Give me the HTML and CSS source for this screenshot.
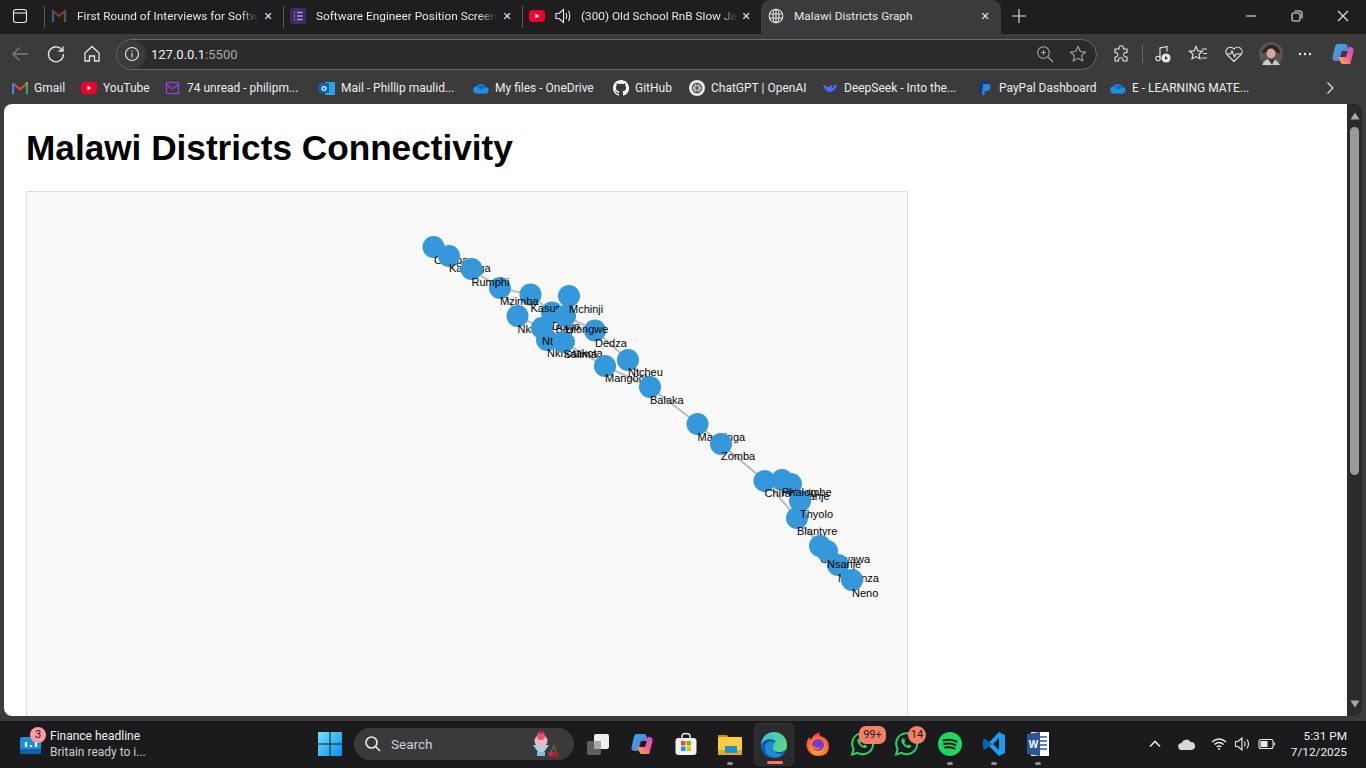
FILE: index.html
```html
<!DOCTYPE html>
<html lang="en">
<head>
<meta charset="utf-8">
<title>Malawi Districts Graph</title>
<link rel="stylesheet" href="styles.css">
</head>
<body>
<div class="tabstrip">
  <div class="sidebtn"><svg width="16" height="16" viewBox="0 0 16 16" class="ln"><rect x="1.500" y="1.500" width="13" height="13" rx="2.500"/><path d="M1.500 5h13"/></svg></div>
  <div class="tab sep">
    <svg class="ticon" width="16" height="16" viewBox="0 0 16 16"><path d="M2 14V3l6 5 6-5v11" fill="none" stroke="#8e3a34" stroke-width="2.200"/><path d="M2 14V4" stroke="#2d5f8f" stroke-width="2.200"/><path d="M14 14V4" stroke="#2f6b46" stroke-width="2.200"/></svg>
    <span class="ttext">First Round of Interviews for Softw</span><span class="tclose">✕</span>
  </div>
  <div class="tab sep">
    <svg class="ticon" width="16" height="16" viewBox="0 0 16 16"><rect width="16" height="16" rx="2" fill="#3f2a63"/><path d="M4 4.500h1M7 4.500h5.500M4 8h1M7 8h5.500M4 11.500h1M7 11.500h5.500" stroke="#a99bc8" stroke-width="1.500"/></svg>
    <span class="ttext">Software Engineer Position Screen</span><span class="tclose">✕</span>
  </div>
  <div class="tab sep tab-audio">
    <svg class="ticon" width="16" height="16" viewBox="0 0 16 16"><rect y="2" width="16" height="12" rx="3.500" fill="#f1002c"/><path d="M6.500 5.500v5l4-2.500z" fill="#fff"/></svg>
    <svg class="ticon ln" width="18" height="18" viewBox="0 0 18 18"><path d="M2 6.500h3L9.500 2.500v13L5 11.500H2zM12 6q1.500 3 0 6M14.500 4q2.500 5 0 10"/></svg>
    <span class="ttext">(300) Old School RnB Slow Ja</span><span class="tclose">✕</span>
  </div>
  <div class="tab active">
    <svg class="ticon ln" width="16" height="16" viewBox="0 0 16 16"><circle cx="8" cy="8" r="6.800"/><ellipse cx="8" cy="8" rx="3" ry="6.800"/><path d="M1.500 6h13M1.500 10h13M8 1.200v13.600"/></svg>
    <span class="ttext">Malawi Districts Graph</span><span class="tclose">✕</span>
  </div>
  <div class="newtab"><svg width="16" height="16" viewBox="0 0 16 16" class="ln"><path d="M8 1v14M1 8h14"/></svg></div>
  <div class="winbtns">
    <svg width="12" height="12" viewBox="0 0 12 12" class="ln"><path d="M1 6h10"/></svg>
    <svg width="12" height="12" viewBox="0 0 12 12" class="ln"><rect x="1" y="3" width="8" height="8" rx="1.500"/><path d="M3.500 1H9q2 0 2 2v5.500"/></svg>
    <svg width="12" height="12" viewBox="0 0 12 12" class="ln"><path d="M1 1l10 10M11 1L1 11"/></svg>
  </div>
</div>

<div class="toolbar">
  <svg class="navbtn dim" width="20" height="20" viewBox="0 0 20 20"><path d="M18 10H3M9.500 3.500L3 10l6.500 6.500"/></svg>
  <svg class="navbtn" width="20" height="20" viewBox="0 0 20 20"><path d="M16.500 6.500A7.500 7.500 0 1 0 17.500 10M17 2.500v4.500h-4.500"/></svg>
  <svg class="navbtn" width="20" height="20" viewBox="0 0 20 20"><path d="M3 9l7-6.500L17 9v8h-4.500v-5h-5v5H3z"/></svg>
  <div class="address">
    <span class="infobtn"><svg width="16" height="16" viewBox="0 0 16 16" class="ln"><circle cx="8" cy="8" r="6.500"/><path d="M8 7v4.500M8 4.500v1.200"/></svg></span>
    <span class="url">127.0.0.1<span class="port">:5500</span></span>
    <svg class="addr-ic" width="18" height="18" viewBox="0 0 18 18"><circle cx="7.500" cy="7.500" r="5.800"/><path d="M12 12l5 5M5 7.500h5M7.500 5v5"/></svg>
    <svg class="addr-ic" width="18" height="18" viewBox="0 0 18 18"><path d="M9 1.500l2.300 5 5.200.6-3.900 3.600 1.100 5.300L9 13.300 4.300 16l1.100-5.300L1.500 7.100l5.200-.6z"/></svg>
  </div>
  <div class="tools">
    <svg class="tool" width="20" height="20" viewBox="0 0 20 20"><path d="M8 3.500a2.300 2.300 0 0 1 4.500 0V5h3.500v3.500h-1.500a2.300 2.300 0 0 0 0 4.500H16v4h-4v-1.500a2.300 2.300 0 0 0-4.500 0V17H4v-4h1a2.300 2.300 0 0 0 0-4.500H4V5h4z"/></svg>
    <span class="toolsep"></span>
    <svg class="tool" width="20" height="20" viewBox="0 0 20 20"><path d="M8 14V4l7-1.500v5"/><circle cx="6" cy="14.500" r="2.200"/><circle cx="14" cy="14" r="4" fill="#e8e8e8"/><path d="M13 12v4l3-2z" fill="#333" stroke="none"/></svg>
    <svg class="tool" width="20" height="20" viewBox="0 0 20 20"><path d="M8 2.500l1.900 4.400 4.600.4-3.500 3 1 4.700L8 12.600l-4 2.400 1-4.700-3.500-3 4.600-.4zM14 5h5M15 9.500h4M13.500 14h5.500"/></svg>
    <svg class="tool" width="20" height="20" viewBox="0 0 20 20"><path d="M10 17.500L2.800 10.500a4.500 4.500 0 0 1 7.200-5.500 4.500 4.500 0 0 1 7.200 5.500zM3 10h3.500l1.500-3 2.500 6 1.500-3H17"/></svg>
    <svg class="avatar" width="24" height="24" viewBox="0 0 24 24"><circle cx="12" cy="12" r="12" fill="#5b5552"/><path d="M3 11q3-9 11-8 7 2 7 9l-5-3-8 1z" fill="#2a2523"/><ellipse cx="12" cy="11.500" rx="4.500" ry="5" fill="#d3a79a"/><path d="M3 23q3-7 9-6 6 0 9 6z" fill="#c9cdd0"/><path d="M9 17l4 6 3-6z" fill="#3a3d40"/></svg>
    <svg class="tool more" width="20" height="20" viewBox="0 0 20 20"><circle cx="5" cy="10" r="1.200"/><circle cx="10" cy="10" r="1.200"/><circle cx="15" cy="10" r="1.200"/></svg>
    <svg class="copilot" width="24" height="24" viewBox="0 0 24 24"><defs><linearGradient id="cpa" x1="0" y1="0" x2="1" y2="1"><stop offset="0" stop-color="#27b7d8"/><stop offset="1" stop-color="#7e5fe8"/></linearGradient><linearGradient id="cpb" x1="0" y1="1" x2="1" y2="0"><stop offset="0" stop-color="#f7c22f"/><stop offset=".5" stop-color="#f2608f"/><stop offset="1" stop-color="#d84bd3"/></linearGradient></defs><path d="M7 2h7q2 0 2.500 2l2.500 5H11l-3 10H5Q1 19 1.500 15L4 5q.6-3 3-3z" fill="url(#cpa)"/><path d="M19 22h-7q-2 0-2.500-2L7 15h8l3-10h1q4 0 3.500 4L20 19q-.6 3-1 3z" fill="url(#cpb)"/></svg>
  </div>
</div>

<div class="bookmarks">
  <div class="bm"><svg width="16" height="16" viewBox="0 0 16 16"><path d="M1 3.500l7 5.500 7-5.500" fill="none" stroke="#ea4335" stroke-width="2.200"/><path d="M1.100 14V3.500" stroke="#4285f4" stroke-width="2.200"/><path d="M14.900 14V3.500" stroke="#34a853" stroke-width="2.200"/><path d="M14.900 4l-.1-1.500" stroke="#fbbc04" stroke-width="2.200"/></svg><span>Gmail</span></div>
  <div class="bm"><svg width="16" height="16" viewBox="0 0 16 16"><rect y="2" width="16" height="12" rx="3.500" fill="#f1002c"/><path d="M6.500 5.500v5l4-2.500z" fill="#fff"/></svg><span>YouTube</span></div>
  <div class="bm"><svg width="16" height="16" viewBox="0 0 16 16"><rect x="1.500" y="2.500" width="12" height="11" fill="none" stroke="#9a3ee0" stroke-width="1.300"/><path d="M1.500 4.500l6 4.500 6-4.500" fill="none" stroke="#9a3ee0" stroke-width="1.300"/></svg><span>74 unread - philipm...</span></div>
  <div class="bm"><svg width="16" height="16" viewBox="0 0 16 16"><rect x="6" y="2" width="10" height="13" fill="#2aa4e8"/><rect y="3" width="10" height="10" rx="1" fill="#0a64b8"/><text x="5" y="11" class="olk">o</text></svg><span>Mail - Phillip maulid...</span></div>
  <div class="bm"><svg width="16" height="16" viewBox="0 0 16 16"><path d="M4 13.500a3.500 3.500 0 0 1-.5-7A5 5 0 0 1 12.500 7a3.300 3.300 0 0 1 .5 6.500z" fill="#1e8fe0"/><path d="M5 7a5 5 0 0 1 7.500 0L8 10z" fill="#0a6ac0"/></svg><span>My files - OneDrive</span></div>
  <div class="bm"><svg width="16" height="16" viewBox="0 0 16 16"><path fill="#fff" d="M8 0C3.580 0 0 3.580 0 8c0 3.540 2.290 6.530 5.470 7.590.4.070.55-.17.55-.38 0-.19-.01-.82-.01-1.490-2.010.37-2.530-.49-2.690-.94-.09-.23-.48-.94-.82-1.130-.28-.15-.68-.52-.01-.53.63-.01 1.080.58 1.230.82.720 1.210 1.870.87 2.330.66.070-.52.280-.87.510-1.070-1.780-.2-3.640-.89-3.640-3.950 0-.87.310-1.590.820-2.150-.08-.2-.36-1.020.08-2.120 0 0 .67-.21 2.200.82.640-.18 1.320-.27 2-.27s1.360.09 2 .27c1.530-1.040 2.200-.82 2.200-.82.440 1.100.16 1.920.08 2.120.51.560.82 1.270.82 2.150 0 3.070-1.870 3.750-3.650 3.950.29.250.54.730.54 1.480 0 1.070-.01 1.930-.01 2.200 0 .21.150.46.550.38A8.010 8.010 0 0 0 16 8c0-4.420-3.580-8-8-8z"/></svg><span>GitHub</span></div>
  <div class="bm"><svg width="16" height="16" viewBox="0 0 16 16"><circle cx="8" cy="8" r="8" fill="#e8e8e8"/><circle cx="8" cy="8" r="4.500" fill="none" stroke="#444" stroke-width="1.300"/><path d="M5 6l6 4M11 6l-6 4M8 3.500v9" stroke="#444" stroke-width="1"/></svg><span>ChatGPT | OpenAI</span></div>
  <div class="bm"><svg width="16" height="16" viewBox="0 0 16 16"><path d="M1 4q1 7 7 8 3 0 5-3 2-2 2-5-2 2-4 1.500Q8 4 7 7.500 4 7 1 4z" fill="#4d6bfe"/><circle cx="10.500" cy="7" r="1" fill="#333"/></svg><span>DeepSeek - Into the...</span></div>
  <div class="bm"><svg width="16" height="16" viewBox="0 0 16 16"><path d="M4 1h5q4 0 3.500 3.500Q12 8.500 8 8.500H6.500L5.500 15H2.500z" fill="#0a3a8a"/><path d="M6 4h5q3.500.5 2.500 4-.8 3-4.500 3H8l-.8 4H5z" fill="#2a8ad8"/></svg><span>PayPal Dashboard</span></div>
  <div class="bm"><svg width="16" height="16" viewBox="0 0 16 16"><path d="M4 13.500a3.500 3.500 0 0 1-.5-7A5 5 0 0 1 12.500 7a3.300 3.300 0 0 1 .5 6.500z" fill="#1e8fe0"/><path d="M5 7a5 5 0 0 1 7.500 0L8 10z" fill="#0a6ac0"/></svg><span>E - LEARNING MATE...</span></div>
  <svg class="bmmore ln" width="12" height="14" viewBox="0 0 12 14"><path d="M3.500 1.500L9 7l-5.500 5.500"/></svg>
</div>

<div class="viewport">
  <main class="page">
    <h1>Malawi Districts Connectivity</h1>
    <div class="graph">
      <svg width="880" height="600" viewBox="27 192 880 600">
        <g class="links">
          <path d="M433 247L449 256L471 269L500 288L531 295L552 313L565 316L595 330L628 360L650 387"/>
          <path d="M500 288L518 316L542 328L547 340L563 342L605 366L650 387L698 424L721 444L765 481L797 518L820 546L827 551L838 565L852 580"/>
          <path d="M569 296L565 316M765 481L782 481L791 484L800 501L797 518"/>
        </g>
        <g class="node">
          <circle cx="433.500" cy="247" r="11"/><text x="434" y="264">Chitipa</text>
          <circle cx="449" cy="256" r="11"/><text x="449" y="272">Karonga</text>
          <circle cx="471.500" cy="269" r="11"/>
          <circle cx="530.500" cy="294.500" r="11"/>
          <circle cx="500" cy="288" r="11"/>
          <text x="471.500" y="286">Rumphi</text>
          <text x="500" y="305">Mzimba</text>
          <circle cx="517.500" cy="316" r="11"/><text x="517.500" y="333">Nkhata Bay</text>
          <circle cx="547" cy="340" r="11"/><text x="547" y="357">Nkhotakota</text>
          <circle cx="542" cy="328" r="11"/>
          <circle cx="552" cy="312.500" r="11"/>
          <text x="530.500" y="311.500">Kasungu</text>
          <text x="552" y="329.500">Dowa</text>
          <text x="542" y="345">Ntchisi</text>
          <circle cx="569" cy="296" r="11"/>
          <circle cx="563.500" cy="342" r="11"/><text x="563.500" y="358">Salima</text>
          <circle cx="565" cy="316" r="11"/>
          <text x="569" y="313">Mchinji</text>
          <circle cx="595" cy="330.500" r="11"/>
          <text x="565" y="333">Lilongwe</text>
          <text x="595" y="347">Dedza</text>
          <circle cx="605" cy="366" r="11"/><text x="605" y="382">Mangochi</text>
          <circle cx="628" cy="360" r="11"/><text x="628" y="376">Ntcheu</text>
          <circle cx="650" cy="387" r="11"/><text x="650" y="404">Balaka</text>
          <circle cx="697.500" cy="424" r="11"/><text x="697.500" y="441">Machinga</text>
          <circle cx="721" cy="444" r="11"/><text x="721" y="460">Zomba</text>
          <circle cx="764.500" cy="481" r="11"/>
          <circle cx="782" cy="480" r="11"/>
          <circle cx="791" cy="484" r="11"/>
          <text x="764.500" y="497">Chiradzulu</text>
          <text x="791" y="500">Mulanje</text>
          <circle cx="800" cy="501" r="11"/>
          <circle cx="797" cy="518" r="11"/>
          <text x="782" y="496">Phalombe</text>
          <text x="800" y="518">Thyolo</text>
          <text x="797" y="535">Blantyre</text>
          <circle cx="820" cy="546" r="11"/><text x="820" y="563">Chikwawa</text>
          <circle cx="827" cy="551" r="11"/>
          <circle cx="838" cy="565" r="11"/>
          <text x="827" y="568">Nsanje</text>
          <text x="838" y="582">Mwanza</text>
          <circle cx="852" cy="580" r="11"/><text x="852" y="597">Neno</text>
        </g>
      </svg>
    </div>
  </main>
  <div class="scrollbar">
    <svg width="10" height="8" viewBox="0 0 10 8"><path d="M5 .5l4.500 7h-9z"/></svg>
    <div class="thumb"></div>
    <svg class="sb-down" width="10" height="8" viewBox="0 0 10 8"><path d="M5 7.500L.5 .5h9z"/></svg>
  </div>
</div>

<footer class="taskbar">
  <div class="widget">
    <span class="widget-ic">
      <svg width="21" height="17" viewBox="0 0 21 17"><rect width="21" height="17" rx="2" fill="#1d8fd8"/><rect y="12" width="21" height="5" rx="1" fill="#0b62a8"/><path d="M6 5v5M11 8v2M16 5v5" stroke="#fff" stroke-width="2.200"/></svg>
      <span class="wbadge">3</span>
    </span>
    <div class="wtext"><span>Finance headline</span><span class="wsub">Britain ready to i...</span></div>
  </div>
  <svg class="winlogo" width="24" height="24" viewBox="0 0 24 24"><defs><linearGradient id="wl" x1="0" y1="0" x2="1" y2="1"><stop offset="0" stop-color="#6fe0fa"/><stop offset="1" stop-color="#0a8fef"/></linearGradient></defs><path d="M0 0h11.500v11.500H0zM12.500 0H24v11.500H12.500zM0 12.500h11.500V24H0zM12.500 12.500H24V24H12.500z" fill="url(#wl)"/></svg>
  <div class="search">
    <svg width="18" height="18" viewBox="0 0 18 18" class="ln thick"><circle cx="7.500" cy="7.500" r="5.500"/><path d="M11.500 11.500L16 16"/></svg>
    <span class="stext">Search</span>
    <svg class="sdoodle" width="30" height="28" viewBox="0 0 30 28"><path d="M3 15h16l-5 7H8z" fill="#9fd4ea"/><rect x="7" y="22" width="8" height="4" fill="#7fbcd8"/><circle cx="11" cy="11" r="6.500" fill="#f4b4c4"/><circle cx="11" cy="6" r="4" fill="#e0567a"/><circle cx="11" cy="2.500" r="2" fill="#c8283f"/><circle cx="21" cy="24" r="2.800" fill="#c8283f"/><circle cx="26" cy="25" r="2.800" fill="#a81f34"/><path d="M21 22l3-7 2 8" fill="none" stroke="#5a7a3a"/></svg>
  </div>
  <div class="apps">
    <div class="app"><svg width="26" height="24" viewBox="0 0 26 24"><rect x="2" y="9" width="14" height="14" rx="2" fill="#5f5f5f"/><rect x="9" y="2" width="15" height="15" rx="2" fill="#efefef"/><rect x="9" y="9" width="7" height="8" fill="#a8a8a8"/></svg></div>
    <div class="app"><svg width="24" height="24" viewBox="0 0 24 24"><defs><linearGradient id="cpc" x1="0" y1="0" x2="1" y2="1"><stop offset="0" stop-color="#27b7d8"/><stop offset="1" stop-color="#7e5fe8"/></linearGradient><linearGradient id="cpd" x1="0" y1="1" x2="1" y2="0"><stop offset="0" stop-color="#f7c22f"/><stop offset=".5" stop-color="#f2608f"/><stop offset="1" stop-color="#d84bd3"/></linearGradient></defs><path d="M7 2h7q2 0 2.500 2l2.500 5H11l-3 10H5Q1 19 1.500 15L4 5q.6-3 3-3z" fill="url(#cpc)"/><path d="M19 22h-7q-2 0-2.500-2L7 15h8l3-10h1q4 0 3.500 4L20 19q-.6 3-1 3z" fill="url(#cpd)"/></svg></div>
    <div class="app"><svg width="24" height="24" viewBox="0 0 24 24"><path d="M8 6V4q0-2.500 4-2.500T16 4v2" fill="none" stroke="#e8e8e8" stroke-width="1.500"/><rect x="1.500" y="6" width="21" height="17" rx="3" fill="#f3f3f3"/><rect x="7" y="9" width="4.500" height="4.500" fill="#f25022"/><rect x="12.500" y="9" width="4.500" height="4.500" fill="#7fba00"/><rect x="7" y="14.500" width="4.500" height="4.500" fill="#00a4ef"/><rect x="12.500" y="14.500" width="4.500" height="4.500" fill="#ffb900"/></svg></div>
    <div class="app running"><svg width="26" height="24" viewBox="0 0 26 24"><path d="M1 3h9l2 3H1z" fill="#c98a12"/><rect x="1" y="5" width="24" height="18" rx="1" fill="#fbcf3c"/><rect x="1" y="18" width="24" height="5" fill="#e8a91f"/><rect x="8" y="14" width="12" height="7" rx="1" fill="#1f8fd8"/></svg></div>
    <div class="app current"><svg width="28" height="28" viewBox="0 0 28 28"><defs><linearGradient id="eg" x1="0" y1="0" x2="1" y2="1"><stop offset="0" stop-color="#3bc1d8"/><stop offset="1" stop-color="#6fdc6a"/></linearGradient></defs><circle cx="14" cy="14" r="13" fill="url(#eg)"/><path d="M27 15c0 4-4 6-8 6-5 0-8-3-8-6 0-2 2-4 5-4-1-2-4-3-6-3C6 8 2 10 1 15c0 7 6 12 13 12s13-5 13-12z" fill="#0c5aa8"/><path d="M13 16c0 4 3 7 8 7 1 0 2-.3 3-.8-2.500 2.500-6 4-10 4-5 0-9-4-9-9 0-4 3-7 6-7 2 0 3 1 4 2-1 1-2 2-2 3.800z" fill="#1a8fd8"/></svg></div>
    <div class="app"><svg width="26" height="26" viewBox="0 0 26 26"><defs><radialGradient id="ff" cx=".5" cy=".65" r=".7"><stop offset="0" stop-color="#ffcf3a"/><stop offset=".6" stop-color="#ff6a2a"/><stop offset="1" stop-color="#e31587"/></radialGradient></defs><path d="M13 25A11.500 11.500 0 0 1 2 10q1-3 3-4 0 2 1 3 2-6 9-8-1 2 0 4 9 2 9 11 0 9-11 9z" fill="url(#ff)"/><circle cx="13" cy="14" r="6" fill="#7139d6"/><path d="M8 14q3 4 8 2-3 5-8 1z" fill="#ff7139"/></svg></div>
    <div class="app"><svg class="wa" width="26" height="26" viewBox="0 0 26 26"><path d="M3 23.500l1.600-5.500a10.500 10.500 0 1 1 4 3.900z"/><path class="fillp" d="M9.500 7.500c-1.200.8-1.500 2.500-.5 4.500 1.300 2.500 3.500 4.500 6 5 1.500.2 3-.6 3.300-2l-2.600-1.500-1.200 1.200c-1.400-.5-2.700-1.900-3.300-3.200l1-1.200-1-2.800z"/></svg><span class="nbadge wide">99+</span></div>
    <div class="app"><svg class="wa" width="26" height="26" viewBox="0 0 26 26"><path d="M3 23.500l1.600-5.500a10.500 10.500 0 1 1 4 3.900z"/><path class="fillp" d="M9.500 7.500c-1.200.8-1.500 2.500-.5 4.500 1.300 2.500 3.500 4.500 6 5 1.500.2 3-.6 3.300-2l-2.600-1.500-1.200 1.200c-1.400-.5-2.700-1.900-3.300-3.200l1-1.200-1-2.800z"/></svg><span class="nbadge">14</span></div>
    <div class="app running"><svg width="24" height="24" viewBox="0 0 24 24"><circle cx="12" cy="12" r="12" fill="#1ed760"/><path d="M5.500 8.500q7-2 13 1.200M6.200 12q6-1.500 11 1M7 15.500q5-1 9.500 1" fill="none" stroke="#131313" stroke-width="2" stroke-linecap="round"/></svg></div>
    <div class="app running"><svg width="24" height="26" viewBox="0 0 24 26"><path d="M17 1l6 3v18l-6 3-10-10-4.500 3.500L1 17V9l1.500-1L7 11.500zM17 7l-6 6 6 6z" fill="#1f9cf0" fill-rule="evenodd"/><path d="M7 11.500L2.500 8 1 9v8l1.500 1L7 14.500 11 13z" fill="#0065a9"/></svg></div>
    <div class="app running"><svg width="24" height="26" viewBox="0 0 24 26"><rect x="5" y="1" width="18" height="24" fill="#fff"/><path d="M13 6h8M13 10h8M13 14h8M13 18h8" stroke="#2b579a" stroke-width="1.500"/><path d="M1 3l13-2v24L1 23z" fill="#2b579a"/><text x="7.500" y="16.500" class="wd">W</text></svg></div>
  </div>
  <div class="tray">
    <svg width="12" height="12" viewBox="0 0 12 12" class="ln thick"><path d="M1 8.500L6 3.500l5 5"/></svg>
    <svg class="cloud" width="18" height="12" viewBox="0 0 18 12"><path d="M4 12a3.500 3.500 0 0 1-.5-7A5 5 0 0 1 12.500 4a3.800 3.800 0 0 1 1 8z" fill="#d8d8d8"/></svg>
    <svg class="wifi ln thick" width="16" height="14" viewBox="0 0 16 14"><path d="M1 5q7-6 14 0M3.500 7.500q4.500-4 9 0M5.800 10q2.200-2 4.400 0"/><circle class="fillw" cx="8" cy="12" r="1"/></svg>
    <svg class="vol ln" width="18" height="16" viewBox="0 0 18 16"><path d="M1.500 5.500h2.500L8 2v12l-4-3.500H1.500zM10.500 5.500q1.500 2.500 0 5M13 3.500q3 4.500 0 9"/></svg>
    <svg class="batt ln" width="18" height="12" viewBox="0 0 18 12"><rect x="1" y="1.500" width="14" height="9" rx="2"/><rect class="fillw" x="2.500" y="3" width="7" height="6"/><path d="M16.500 4.500v3"/></svg>
  </div>
  <div class="clock"><span>5:31 PM</span><span>7/12/2025</span></div>
</footer>
</body>
</html>
```
FILE: styles.css
```css
* { box-sizing: border-box; }
html, body { margin: 0; height: 100%; overflow: hidden; }
body {
  width: 1366px; height: 768px;
  display: flex; flex-direction: column;
  background: #3b3b3b; color: #e8e8e8;
  font: 12px Roboto, "Liberation Sans", sans-serif;
}
.ln { fill: none; stroke: #e8e8e8; stroke-width: 1.1; }
.ln.thick { stroke-width: 1.6; }
.ln .fillw, .fillw { fill: #e8e8e8; stroke: none; }

/* tab strip */
.tabstrip { height: 34px; background: #1e1e1e; display: flex; align-items: stretch; flex: none; }
.sidebtn { width: 44px; display: flex; align-items: center; justify-content: center; padding: 0 4px 2px 0; }
.tab { width: 239px; display: flex; align-items: center; padding: 0 7px 2px 7px; gap: 10px; white-space: nowrap; }
.tab.sep { position: relative; }
.tab.sep::after { content: ""; position: absolute; left: 0; top: 6px; width: 1px; height: 22px; background: #5a5a5a; }
.tab.tab-audio { gap: 9px; }
.tab.active { width: 240px; background: #3b3b3b; border-radius: 9px 9px 0 0; padding: 0 8px 2px 7px; gap: 10px; }
.ticon { flex: none; }
.ttext { flex: 1; overflow: hidden; font-size: 11.8px; color: #e6e6e6; -webkit-mask-image: linear-gradient(90deg, #000 90%, transparent); mask-image: linear-gradient(90deg, #000 90%, transparent); }
.active .ttext { -webkit-mask-image: none; mask-image: none; }
.tclose { flex: none; width: 16px; margin-left: -8px; text-align: center; font-size: 11px; color: #e6e6e6; font-family: "DejaVu Sans", sans-serif; }
.newtab { width: 36px; display: flex; align-items: center; justify-content: center; padding-bottom: 2px; }
.winbtns { margin-left: auto; width: 138px; display: grid; grid-template-columns: repeat(3, 46px); justify-items: center; align-items: center; padding-bottom: 2px; }

/* toolbar */
.toolbar { height: 36px; flex: none; display: flex; align-items: center; padding: 4px 0 0 10px; background: #3b3b3b; }
.navbtn { fill: none; stroke: #e8e8e8; stroke-width: 1.3; margin-right: 16px; flex: none; }
.navbtn.dim { stroke: #7c7c7c; }
.navbtn:nth-of-type(3) { margin-right: 14px; }
.address { width: 981px; height: 31px; flex: none; display: flex; align-items: center; background: #2b2b2b; border: 1px solid #6a6a6a; border-radius: 16px; padding-right: 9px; gap: 15px; }
.infobtn { width: 29px; height: 29px; border-radius: 50%; background: #3b3b3b; display: flex; align-items: center; justify-content: center; flex: none; margin-right: -10px; }
.url { flex: 1; font-size: 13px; color: #f2f2f2; }
.port { color: #a8a8a8; }
.addr-ic { fill: none; stroke: #a8a8a8; stroke-width: 1.1; flex: none; }
.tools { flex: 1; display: flex; align-items: center; padding-left: 14px; }
.tool { fill: none; stroke: #e8e8e8; stroke-width: 1.1; flex: none; margin-right: 16px; }
.tool.more { fill: #e8e8e8; stroke: none; margin-right: 21px; }
.toolsep { width: 1px; height: 18px; background: #666; margin: 0 9px 0 -5px; }
.avatar { flex: none; margin-right: 12px; margin-left: -1px; }
.copilot { flex: none; margin-left: -5px; }

/* bookmarks */
.bookmarks {
  height: 34px; flex: none; display: grid; align-items: center; padding: 2px 0 0 12px;
  grid-template-columns: 69px 84px 154px 154px 140px 76px 133px 155px 133px 212px 12px;
  background: #3b3b3b;
}
.bm { display: flex; align-items: center; gap: 6px; white-space: nowrap; font-size: 12px; color: #ececec; }
.bm svg { flex: none; }
.olk { font: bold 9px "Liberation Sans", sans-serif; fill: #fff; text-anchor: middle; }
.bmmore { justify-self: start; margin-left: 2px; }

/* viewport */
.viewport { height: 612px; flex: none; display: flex; padding: 0 4px; }
.page { width: 1343px; height: 612px; background: #fff; border-radius: 8px 0 0 8px; overflow: hidden; padding: 21px 22px 0; color: #000; font-family: "Liberation Sans", Arial, sans-serif; }
h1 { margin: 0 0 21px; font-size: 35.2px; line-height: 46px; font-weight: 700; height: 45px; }
.graph { width: 882px; height: 602px; border: 1px solid #ddd; background: #f9f9f9; }
.graph svg { display: block; }
.links path { fill: none; stroke: #bbb; stroke-width: 2; }
.node circle { fill: #3498db; }
.node text { font: 11px "Liberation Sans", Arial, sans-serif; fill: #000; }
.scrollbar { width: 15px; display: flex; flex-direction: column; align-items: center; padding: 8px 0; background: #2b2b2b; border-radius: 0 8px 8px 0; }
.scrollbar svg { fill: #a8a8a8; flex: none; }
.thumb { width: 9px; height: 348px; margin-top: 7px; background: #9a9a9a; border-radius: 5px; flex: none; }
.sb-down { margin-top: auto; }

/* taskbar */
.taskbar { margin-top: 5px; height: 47px; flex: none; background: #1b1b1d; display: flex; align-items: center; padding: 0 19px 1px 0; }
.widget { width: 318px; display: flex; align-items: center; padding-left: 20px; gap: 9px; flex: none; }
.widget-ic { position: relative; display: block; width: 21px; height: 17px; margin-top: 3px; }
.widget-ic svg { display: block; }
.wbadge { position: absolute; top: -10px; left: 10px; width: 16px; height: 16px; border-radius: 50%; background: #fa9aa2; color: #1b1b1b; font-size: 11px; line-height: 16px; text-align: center; }
.wtext { display: flex; flex-direction: column; font-size: 12px; line-height: 16px; color: #f0f0f0; }
.wsub { color: #cfcfcf; }
.winlogo { flex: none; margin-right: 12px; }
.search { width: 220px; height: 32px; flex: none; display: flex; align-items: center; background: #3a3a3d; border-radius: 16px; padding: 0 14px 0 10px; gap: 9px; }
.stext { flex: 1; font-size: 13.5px; color: #cfcfcf; }
.sdoodle { flex: none; }
.apps { display: grid; grid-template-columns: repeat(11, 44px); margin-left: 2px; flex: none; height: 46px; }
.app { position: relative; display: flex; align-items: center; justify-content: center; }
.app.running::after, .app.current::after { content: ""; position: absolute; left: 19px; bottom: 2px; width: 6px; height: 3px; border-radius: 2px; background: #8f8f8f; }
.app.current { background: #2b2b2d; border: 1px solid #333; border-radius: 5px; margin: 2px 2px 1px; }
.app.current::after { left: 12px; width: 16px; background: #f47a62; bottom: 1px; }
.wa path { fill: none; stroke: #25d366; stroke-width: 2; }
.wa path.fillp { fill: #25d366; stroke: none; }
.wd { font: bold 10px "Liberation Sans", sans-serif; fill: #fff; text-anchor: middle; }
.nbadge { position: absolute; top: 5px; left: 24px; width: 18px; height: 18px; border-radius: 9px; background: #f47f68; color: #1b1b1b; font-size: 11px; line-height: 18px; text-align: center; }
.nbadge.wide { left: 19px; width: 27px; border-radius: 7px; }
.tray { margin-left: 89px; flex: none; display: flex; align-items: center; }
.tray .cloud { margin-left: 17px; }
.tray .wifi { margin-left: 15px; }
.tray .vol { margin-left: 7px; }
.tray .batt { margin-left: 6px; }
.clock { margin-left: auto; flex: none; display: flex; flex-direction: column; align-items: flex-end; font-size: 11.8px; line-height: 16px; color: #f0f0f0; }
```
